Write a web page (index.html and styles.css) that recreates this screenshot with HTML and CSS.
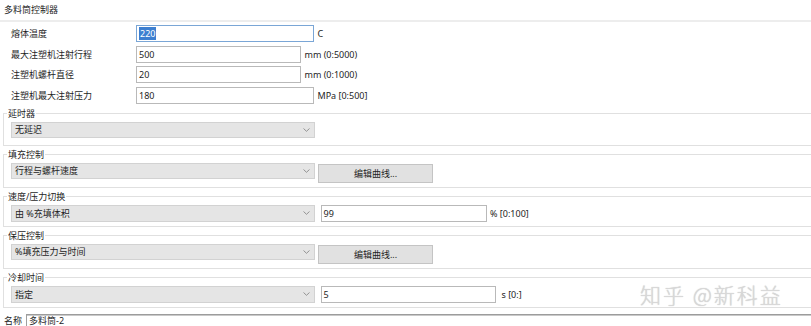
FILE: index.html
```html
<!DOCTYPE html>
<html lang="zh-CN">
<head>
    <meta charset="UTF-8">
    <title>多料筒控制器</title>
    <link rel="stylesheet" href="styles.css">
</head>
<body>
    <div class="panel">
        <div class="title">多料筒控制器</div>

        <div class="params">
            <div class="param-row">
                <span class="param-label">熔体温度</span>
                <div class="field field-lg focused"><span class="selected">220</span></div>
                <span class="unit">C</span>
            </div>
            <div class="param-row">
                <span class="param-label">最大注塑机注射行程</span>
                <div class="field field-md">500</div>
                <span class="unit">mm (0:5000)</span>
            </div>
            <div class="param-row">
                <span class="param-label">注塑机螺杆直径</span>
                <div class="field field-md">20</div>
                <span class="unit">mm (0:1000)</span>
            </div>
            <div class="param-row">
                <span class="param-label">注塑机最大注射压力</span>
                <div class="field field-lg">180</div>
                <span class="unit">MPa [0:500]</span>
            </div>
        </div>

        <fieldset class="group group-first">
            <legend>延时器</legend>
            <div class="ctrl-row">
                <div class="combo">无延迟<svg class="arrow" width="7" height="4" viewBox="0 0 7 4"><path d="M0.5 0.5 L3.5 3.3 L6.5 0.5" fill="none" stroke="#8a8a8a" stroke-width="0.9"/></svg></div>
            </div>
        </fieldset>

        <fieldset class="group">
            <legend>填充控制</legend>
            <div class="ctrl-row">
                <div class="combo">行程与螺杆速度<svg class="arrow" width="7" height="4" viewBox="0 0 7 4"><path d="M0.5 0.5 L3.5 3.3 L6.5 0.5" fill="none" stroke="#8a8a8a" stroke-width="0.9"/></svg></div>
                <div class="btn">编辑曲线...</div>
            </div>
        </fieldset>

        <fieldset class="group">
            <legend>速度/压力切换</legend>
            <div class="ctrl-row">
                <div class="combo combo-tall">由 %充填体积<svg class="arrow" width="7" height="4" viewBox="0 0 7 4"><path d="M0.5 0.5 L3.5 3.3 L6.5 0.5" fill="none" stroke="#8a8a8a" stroke-width="0.9"/></svg></div>
                <div class="field field-side">99</div>
                <span class="unit">% [0:100]</span>
            </div>
        </fieldset>

        <fieldset class="group">
            <legend>保压控制</legend>
            <div class="ctrl-row">
                <div class="combo">%填充压力与时间<svg class="arrow" width="7" height="4" viewBox="0 0 7 4"><path d="M0.5 0.5 L3.5 3.3 L6.5 0.5" fill="none" stroke="#8a8a8a" stroke-width="0.9"/></svg></div>
                <div class="btn">编辑曲线...</div>
            </div>
        </fieldset>

        <fieldset class="group">
            <legend>冷却时间</legend>
            <div class="ctrl-row">
                <div class="combo combo-tall">指定<svg class="arrow" width="7" height="4" viewBox="0 0 7 4"><path d="M0.5 0.5 L3.5 3.3 L6.5 0.5" fill="none" stroke="#8a8a8a" stroke-width="0.9"/></svg></div>
                <div class="field field-side-wide">5</div>
                <span class="unit unit-s">s [0:]</span>
            </div>
        </fieldset>

        <div class="footer">
            <span class="footer-label">名称</span>
            <div class="name-field">多料筒-2</div>
        </div>

        <div class="watermark">知乎 @新科益</div>
    </div>
</body>
</html>
```

FILE: styles.css
```css
* {
    margin: 0;
    padding: 0;
    box-sizing: border-box;
}

body {
    font-family: "Noto Sans", "Noto Sans CJK SC", sans-serif;
    font-size: 9px;
    color: #1e1e1e;
    background: #fff;
    width: 811px;
    height: 326px;
    overflow: hidden;
}

.panel {
    position: relative;
    height: 326px;
}

.title {
    height: 22px;
    line-height: 19px;
    padding-left: 4px;
    border-bottom: 2px solid #ededed;
}

/* parameter rows */
.params {
    display: flex;
    flex-direction: column;
    gap: 3.5px;
    padding-top: 3px;
}

.param-row {
    display: flex;
    align-items: center;
    height: 17px;
}

.param-label {
    width: 136px;
    padding-left: 11px;
    line-height: 17px;
}

.field {
    height: 17px;
    line-height: 15px;
    padding-left: 2px;
    background: #fff;
    border: 1px solid #b9b9b9;
    white-space: nowrap;
}

.field-lg {
    width: 178px;
}

.field-md {
    width: 165px;
}

.field.focused {
    border-color: #7aa6d6;
}

.selected {
    display: inline-block;
    height: 13px;
    line-height: 13px;
    background: #3d7fd0;
    color: #fff;
    padding: 0 1px;
}

.unit {
    margin-left: 3.5px;
    line-height: 17px;
    white-space: nowrap;
}

/* group boxes */
.group {
    margin: 4px 0 0 3px;
    padding: 2px 0 4px 7px;
    border: 1px solid #e0e0e0;
    border-right: none;
    min-inline-size: 0;
}

.group + .group {
    margin-top: 3px;
}

.group legend {
    line-height: 12px;
    margin-left: -4px;
    padding: 0 1px;
}

.ctrl-row {
    display: flex;
    align-items: flex-start;
}

.group-first .ctrl-row {
    min-height: 19px;
}

.combo {
    position: relative;
    width: 304px;
    height: 16px;
    line-height: 14px;
    padding-left: 3px;
    background: #e5e5e5;
    border: 1px solid #d2d2d2;
    white-space: nowrap;
}

.combo-tall {
    height: 17px;
    line-height: 15px;
}

.arrow {
    position: absolute;
    right: 4px;
    top: 50%;
    margin-top: -2px;
}

.btn {
    width: 115px;
    height: 19px;
    margin: 1px 0 0 3px;
    line-height: 17px;
    text-align: center;
    background: #e1e1e1;
    border: 1px solid #c4c4c4;
}

.field-side {
    width: 166px;
    margin-left: 5.5px;
}

.field-side-wide {
    width: 175px;
    margin-left: 5.5px;
}

.unit-s {
    margin-left: 6px;
}

/* name row */
.footer {
    display: flex;
    align-items: center;
    margin-top: 6px;
    height: 14px;
}

.footer-label {
    width: 26px;
    padding-left: 4px;
    line-height: 12px;
}

.name-field {
    flex: 1;
    height: 13px;
    line-height: 11px;
    padding-left: 2px;
    border: 1px solid #c8c8c8;
    border-top-color: #9c9c9c;
    border-left-color: #9f9f9f;
    border-right: none;
    box-shadow: inset 0 1px 0 #c9c9c9;
}

.watermark {
    position: absolute;
    left: 640px;
    top: 279px;
    font-family: "Noto Sans CJK SC", sans-serif;
    font-size: 21px;
    font-weight: 300;
    letter-spacing: 2px;
    color: #d8d8d8;
    text-shadow: 0 0 1px #c4c4c4;
    white-space: nowrap;
}
```
